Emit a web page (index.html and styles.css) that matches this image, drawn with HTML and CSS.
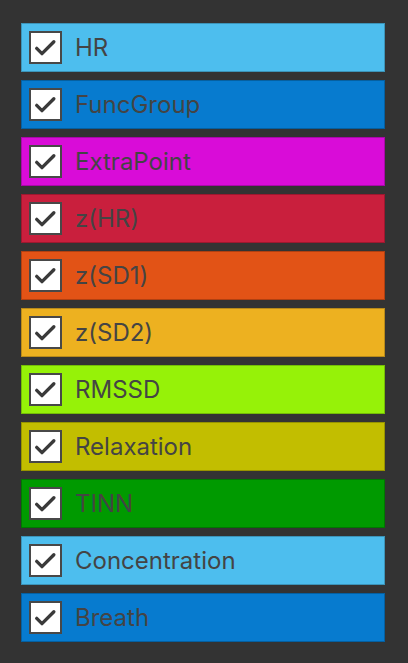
FILE: index.html
```html
<!DOCTYPE html>
<html>
<head>
<meta charset="utf-8">
<link rel="stylesheet" href="styles.css">
</head>
<body>
<div class="list">
  <label class="item c-hr"><span class="box"><svg viewBox="0 0 33 33"><path d="M6.5 17.5 L12.5 23.5 L26 10"/></svg></span><span class="name">HR</span></label>
  <label class="item c-func"><span class="box"><svg viewBox="0 0 33 33"><path d="M6.5 17.5 L12.5 23.5 L26 10"/></svg></span><span class="name">FuncGroup</span></label>
  <label class="item c-extra"><span class="box"><svg viewBox="0 0 33 33"><path d="M6.5 17.5 L12.5 23.5 L26 10"/></svg></span><span class="name">ExtraPoint</span></label>
  <label class="item c-zhr"><span class="box"><svg viewBox="0 0 33 33"><path d="M6.5 17.5 L12.5 23.5 L26 10"/></svg></span><span class="name">z(HR)</span></label>
  <label class="item c-sd1"><span class="box"><svg viewBox="0 0 33 33"><path d="M6.5 17.5 L12.5 23.5 L26 10"/></svg></span><span class="name">z(SD1)</span></label>
  <label class="item c-sd2"><span class="box"><svg viewBox="0 0 33 33"><path d="M6.5 17.5 L12.5 23.5 L26 10"/></svg></span><span class="name">z(SD2)</span></label>
  <label class="item c-rmssd"><span class="box"><svg viewBox="0 0 33 33"><path d="M6.5 17.5 L12.5 23.5 L26 10"/></svg></span><span class="name">RMSSD</span></label>
  <label class="item c-relax"><span class="box"><svg viewBox="0 0 33 33"><path d="M6.5 17.5 L12.5 23.5 L26 10"/></svg></span><span class="name">Relaxation</span></label>
  <label class="item c-tinn"><span class="box"><svg viewBox="0 0 33 33"><path d="M6.5 17.5 L12.5 23.5 L26 10"/></svg></span><span class="name">TINN</span></label>
  <label class="item c-conc"><span class="box"><svg viewBox="0 0 33 33"><path d="M6.5 17.5 L12.5 23.5 L26 10"/></svg></span><span class="name">Concentration</span></label>
  <label class="item c-breath"><span class="box"><svg viewBox="0 0 33 33"><path d="M6.5 17.5 L12.5 23.5 L26 10"/></svg></span><span class="name">Breath</span></label>
</div>
</body>
</html>
```
FILE: styles.css
```css
html, body {
  margin: 0;
  padding: 0;
  background: #333333;
}
body {
  font-family: Inter, Roboto, "Liberation Sans", sans-serif;
}
.list {
  display: flex;
  flex-direction: column;
  gap: 8px;
  padding: 23px 0 0 21px;
  width: 364px;
}
.item {
  display: flex;
  align-items: center;
  height: 49px;
  box-sizing: border-box;
  border: 1px solid rgba(0, 0, 0, 0.22);
  padding-left: 7px;
}
.box {
  width: 33px;
  height: 33px;
  box-sizing: border-box;
  border: 2px solid #484848;
  background: #ffffff;
  display: flex;
  flex: none;
}
.box svg {
  width: 29px;
  height: 29px;
}
.box path {
  fill: none;
  stroke: #3a3a3a;
  stroke-width: 3.8;
  stroke-linecap: round;
  stroke-linejoin: round;
}
.name {
  margin-left: 13px;
  font-size: 24px;
  color: #444444;
  line-height: 1;
}
.c-hr { background: #4dbeee; }
.c-func { background: #077bcf; }
.c-extra { background: #d90cd8; }
.c-zhr { background: #c91f3d; }
.c-sd1 { background: #e25316; }
.c-sd2 { background: #edb120; }
.c-rmssd { background: #96f208; }
.c-relax { background: #c2be00; }
.c-tinn { background: #009a00; }
.c-conc { background: #4dbeee; }
.c-breath { background: #077bcf; }
```
